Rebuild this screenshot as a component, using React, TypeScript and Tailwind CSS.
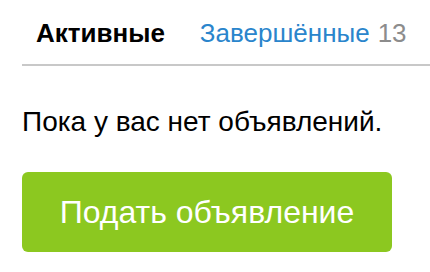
export default function App() {
  return (
    <div className="w-[430px] h-[272px] bg-white overflow-hidden font-['Liberation_Sans',Arial,sans-serif]">
      {/* Tabs */}
      <div className="ml-[22px] border-b-2 border-[#c8c8c8] h-[66px]">
        <div className="flex items-baseline pl-[14px] pt-[18px] text-[26px] leading-[30px]">
          <span className="font-bold text-black">Активные</span>
          <span className="ml-[35px] text-[#2a85cc]">Завершённые</span>
          <span className="ml-[8px] text-[#8c8c8c]">13</span>
        </div>
      </div>

      {/* Empty state */}
      <div className="px-[22px] pt-[40px]">
        <p className="text-[28px] leading-[32px] text-black">Пока у вас нет объявлений.</p>
        <button className="mt-[34px] w-[370px] h-[80px] rounded-[6px] bg-[#8cc820] text-white text-[32px] leading-[36px]">
          Подать объявление
        </button>
      </div>
    </div>
  )
}
